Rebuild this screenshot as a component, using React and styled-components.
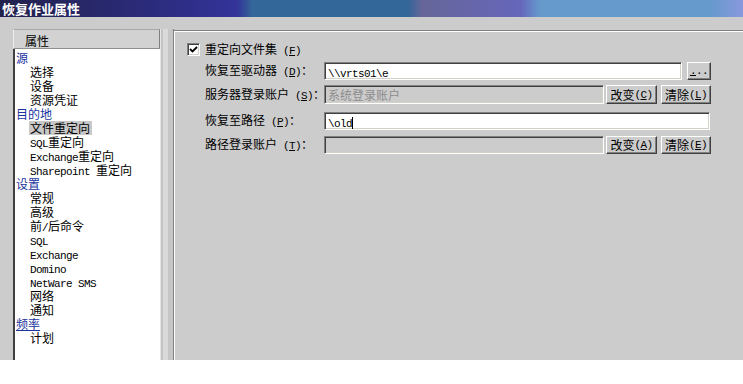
import React from "react";
import styled, { createGlobalStyle } from "styled-components";

const Global = createGlobalStyle`
  body {
    margin: 0;
    background: #ffffff;
    font-family: "Noto Sans CJK SC", "Liberation Sans", sans-serif;
    font-size: 12px;
  }
`;

const Window = styled.div`
  width: 743px;
  height: 360px;
  background: #cccccc;
  display: flex;
  flex-direction: column;
  overflow: hidden;
`;

const TitleBar = styled.div`
  height: 17px;
  line-height: 17px;
  padding-left: 2px;
  color: #ffffff;
  font-size: 13px;
  font-weight: bold;
  background: linear-gradient(
    to right,
    #22224c 0,
    #2c2c80 160px,
    #333399 237px,
    #336699 252px,
    #336699 408px,
    #666699 422px,
    #6666bb 520px,
    #6699cc 540px,
    #6699cc 710px,
    #8899dd 743px
  );
`;

const Body = styled.div`
  flex: 1;
  display: flex;
  padding: 12px 0 0 13px;
  min-height: 0;
`;

const Sidebar = styled.div`
  width: 147px;
  display: flex;
  flex-direction: column;
`;

const SideHeader = styled.div`
  height: 20px;
  box-sizing: border-box;
  padding: 4px 0 0 11px;
  line-height: 14px;
  background: #d2d2d2;
  border-top: 1px solid #a8a8a8;
  border-left: 1px solid #eeeeee;
  border-right: 1px solid #808080;
  border-bottom: 1px solid #909090;
  color: #000;
`;

const List = styled.div`
  flex: 1;
  background: #ffffff;
  border-left: 2px solid #404040;
  padding-top: 2px;
  display: flex;
  flex-direction: column;
`;

const Item = styled.div`
  height: 14px;
  line-height: 14px;
  padding-left: ${({ $sub }) => ($sub ? "14px" : "0")};
  color: ${({ $sub }) => ($sub ? "#000000" : "#1a33a0")};
  white-space: nowrap;
`;

const ItemText = styled.span`
  display: inline-block;
  padding: 0 2px 0 1px;
  background: ${({ $active }) => ($active ? "#c8c8c8" : "transparent")};
  text-decoration: ${({ $focus }) => ($focus ? "underline" : "none")};
`;

const Splitter = styled.div`
  width: 14px;
  background: linear-gradient(
    to right,
    #e6e6e6 0,
    #e6e6e6 1px,
    #c4c4c4 1px,
    #c4c4c4 3px,
    #dadada 3px,
    #dadada 8px,
    #c6c6c6 8px,
    #c6c6c6 13px,
    #808080 13px
  );
`;

const Panel = styled.div`
  flex: 1;
  margin-top: 1px;
  border-top: 1px solid #808080;
  box-shadow: inset 1px 1px #ffffff;
  padding: 12px 0 0 13px;
`;

const CheckRow = styled.div`
  display: flex;
  align-items: center;
  gap: 5px;
  height: 13px;
  line-height: 14px;
`;

const Box = styled.span`
  width: 13px;
  height: 13px;
  box-sizing: border-box;
  background: #ffffff;
  border: 1px solid;
  border-color: #808080 #ffffff #ffffff #808080;
  box-shadow: inset 1px 1px #404040, inset -1px -1px #d4d0c8;
  display: flex;
  align-items: center;
  justify-content: center;
`;

const Form = styled.div`
  width: 506px;
  margin-left: 18px;
  display: flex;
  flex-direction: column;
`;

const Row = styled.div`
  display: flex;
  align-items: center;
  height: ${({ $h }) => $h || 18}px;
  margin-top: ${({ $mt }) => $mt}px;
`;

const Label = styled.div`
  width: 119px;
  flex-shrink: 0;
  white-space: nowrap;
  line-height: 14px;
  color: #000;
`;

const Field = styled.div`
  flex: 1;
  height: 100%;
  box-sizing: border-box;
  margin-right: ${({ $mr }) => $mr || 0}px;
  padding: 1px 3px 0;
  line-height: 15px;
  white-space: nowrap;
  overflow: hidden;
  background: ${({ $disabled }) => ($disabled ? "#cccccc" : "#ffffff")};
  color: ${({ $disabled }) => ($disabled ? "#8c8c8c" : "#000000")};
  border: 1px solid;
  border-color: #808080 #ffffff #ffffff #808080;
  box-shadow: inset 1px 1px #404040, inset -1px -1px #d4d0c8;
`;

const Button = styled.div`
  width: ${({ $w }) => $w}px;
  height: 100%;
  margin-left: ${({ $ml }) => $ml}px;
  box-sizing: border-box;
  flex-shrink: 0;
  background: #cccccc;
  border: 1px solid;
  border-color: #ffffff #404040 #404040 #ffffff;
  box-shadow: inset -1px -1px #808080;
  display: flex;
  align-items: center;
  justify-content: center;
  line-height: 14px;
  white-space: nowrap;
  color: #000;
`;

const Latin = styled.span`
  font-family: "Liberation Mono", "DejaVu Sans Mono", monospace;
  font-size: 11px;
  letter-spacing: -0.6px;
`;

const Caret = styled.span`
  display: inline-block;
  width: 1px;
  height: 13px;
  background: #000;
  vertical-align: -3px;
`;

const Txt = ({ s }) =>
  s
    .split(/([\x20-\x7e]+)/)
    .filter(Boolean)
    .map((p, i) =>
      /[\x20-\x7e]/.test(p[0]) ? (
        <Latin key={i}>{p}</Latin>
      ) : (
        <React.Fragment key={i}>{p}</React.Fragment>
      )
    );

const Accel = ({ text, k, colon }) => (
  <>
    {text}
    <Latin>
      {" "}(<u>{k}</u>)
    </Latin>
    {colon && "："}
  </>
);

const items = [
  { t: "源" },
  { t: "选择", sub: true },
  { t: "设备", sub: true },
  { t: "资源凭证", sub: true },
  { t: "目的地" },
  { t: "文件重定向", sub: true, active: true },
  { t: "SQL重定向", sub: true },
  { t: "Exchange重定向", sub: true },
  { t: "Sharepoint 重定向", sub: true },
  { t: "设置" },
  { t: "常规", sub: true },
  { t: "高级", sub: true },
  { t: "前/后命令", sub: true },
  { t: "SQL", sub: true },
  { t: "Exchange", sub: true },
  { t: "Domino", sub: true },
  { t: "NetWare SMS", sub: true },
  { t: "网络", sub: true },
  { t: "通知", sub: true },
  { t: "频率", focus: true },
  { t: "计划", sub: true },
];

const App = () => {
  return (
    <>
      <Global />
      <Window>
        <TitleBar>恢复作业属性</TitleBar>
        <Body>
          <Sidebar>
            <SideHeader>属性</SideHeader>
            <List>
              {items.map((it) => (
                <Item key={it.t} $sub={it.sub}>
                  <ItemText $active={it.active} $focus={it.focus}>
                    <Txt s={it.t} />
                  </ItemText>
                </Item>
              ))}
            </List>
          </Sidebar>
          <Splitter />
          <Panel>
            <CheckRow>
              <Box>
                <svg width="9" height="9" viewBox="0 0 9 9">
                  <path
                    d="M1 4 L3.5 6.5 L8 2"
                    fill="none"
                    stroke="#000"
                    strokeWidth="1.8"
                  />
                </svg>
              </Box>
              <span>
                <Accel text="重定向文件集" k="F" />
              </span>
            </CheckRow>
            <Form>
              <Row $mt={6}>
                <Label>
                  <Accel text="恢复至驱动器" k="D" colon />
                </Label>
                <Field>
                  <Latin>\\vrts01\e</Latin>
                </Field>
                <Button $w={24} $ml={5}>
                  <Latin>
                    <u>.</u>..
                  </Latin>
                </Button>
              </Row>
              <Row $mt={5} $h={19}>
                <Label>
                  <Accel text="服务器登录账户" k="S" colon />
                </Label>
                <Field $disabled>系统登录账户</Field>
                <Button $w={51} $ml={2}>
                  <Accel text="改变" k="C" />
                </Button>
                <Button $w={50} $ml={4}>
                  <Accel text="清除" k="L" />
                </Button>
              </Row>
              <Row $mt={8}>
                <Label>
                  <Accel text="恢复至路径" k="P" colon />
                </Label>
                <Field $mr={1}>
                  <Latin>\old</Latin>
                  <Caret />
                </Field>
              </Row>
              <Row $mt={6}>
                <Label>
                  <Accel text="路径登录账户" k="T" colon />
                </Label>
                <Field $disabled />
                <Button $w={51} $ml={2}>
                  <Accel text="改变" k="A" />
                </Button>
                <Button $w={50} $ml={4}>
                  <Accel text="清除" k="E" />
                </Button>
              </Row>
            </Form>
          </Panel>
        </Body>
      </Window>
    </>
  );
};

export default App;
